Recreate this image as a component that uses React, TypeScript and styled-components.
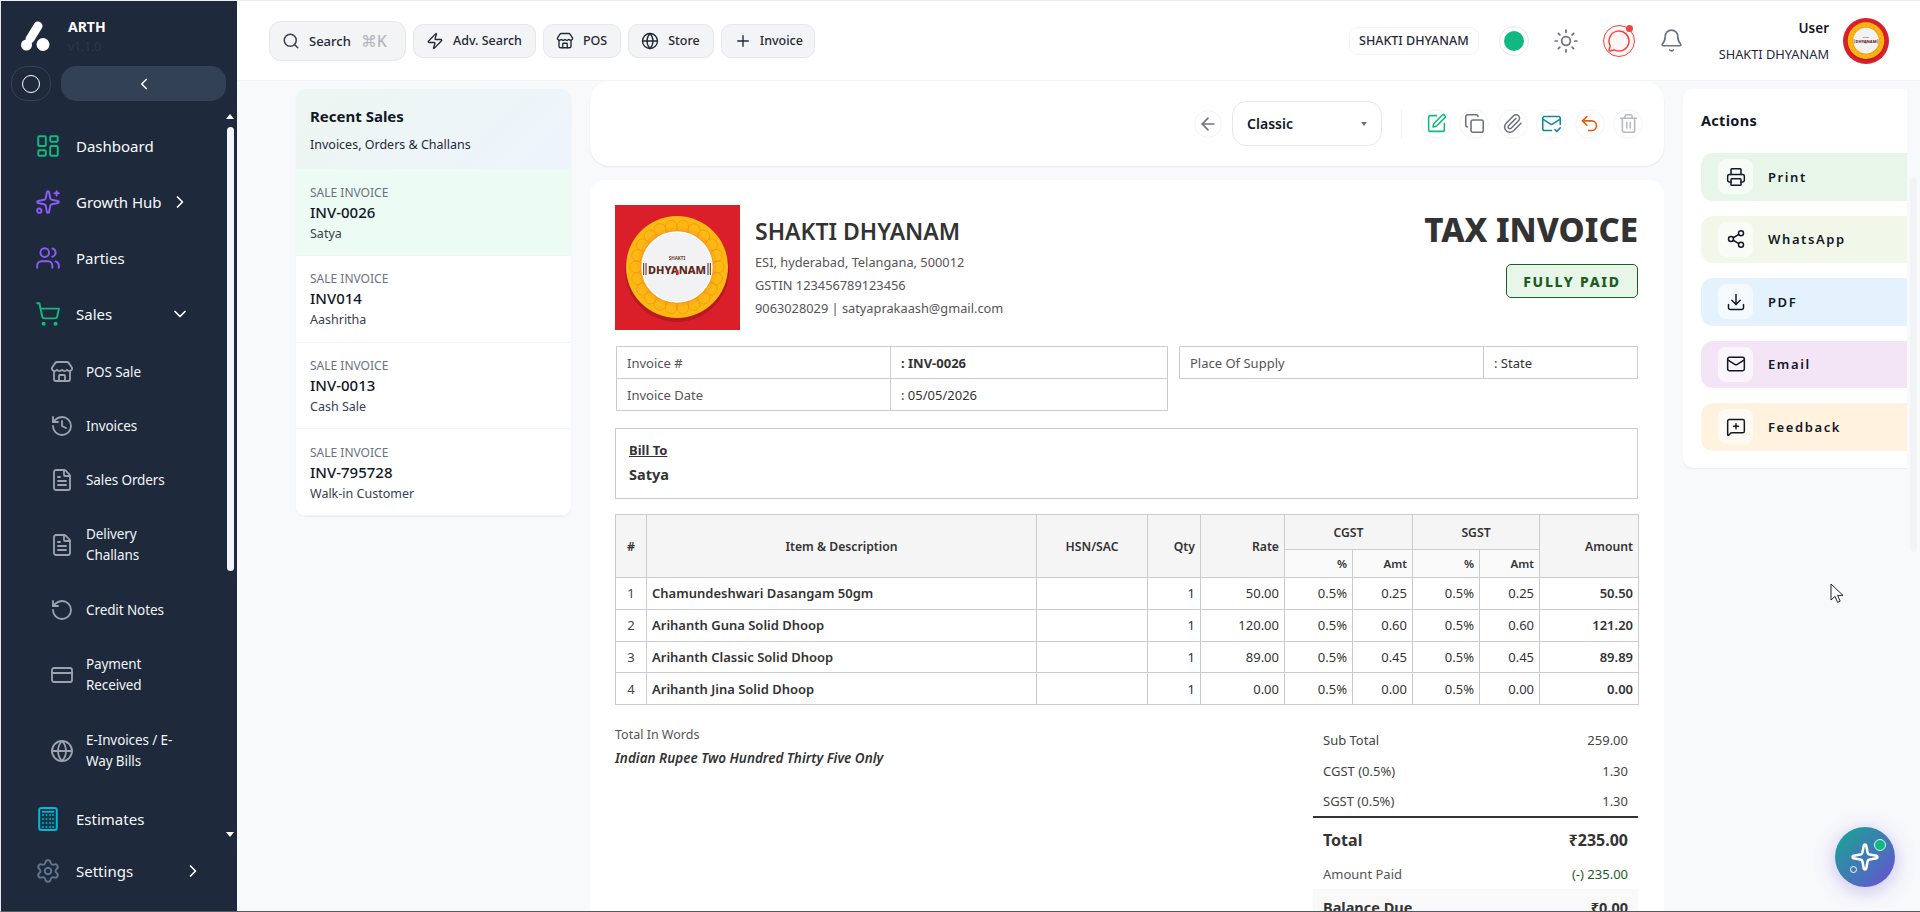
import styled, { createGlobalStyle } from "styled-components";
import {
  ArrowLeft, Bell, ChevronDown, ChevronLeft, ChevronRight, Copy, CreditCard, Download, FileText, Globe,
  History, LayoutDashboard, Mail, MailCheck, MessageCircle, MessageSquarePlus, Paperclip, Plus, Printer,
  RotateCcw, Search, Settings, Share2, ShoppingCart, Sparkle, Sparkles, SquarePen, Store, Sun, Trash2,
  Undo2, Users, Zap,
} from "lucide-react";

const FONT = `"Noto Sans", "Open Sans", sans-serif`;

const GlobalStyle = createGlobalStyle`
  * { box-sizing: border-box; }
  html, body { margin: 0; height: 100%; overflow: hidden; }
  body { font-family: ${FONT}; color: #1f2937; background: #f8f9fb; }
`;

const petals = Array.from({ length: 22 }, (_, i) => (i * Math.PI * 2) / 22);

const BrandPlate = ({ box }: { box: string }) => (
  <svg viewBox={box} width="100%" height="100%" aria-hidden="true">
    <rect x="-4" y="-4" width="133" height="133" fill="#db1f2a" />
    <circle cx="62" cy="65" r="52" fill="#b71a24" />
    <circle cx="62" cy="62" r="51" fill="#fdb913" />
    <circle cx="62" cy="62" r="40" fill="#fbae17" />
    {petals.map((a) => (
      <circle key={a} cx={62 + Math.cos(a) * 41} cy={62 + Math.sin(a) * 41} r="6" fill="none" stroke="#f28c0f" strokeWidth="0.9" opacity="0.7" />
    ))}
    <circle cx="62" cy="62" r="37" fill="#f7941d" opacity="0.6" />
    <circle cx="62" cy="62" r="35" fill="#f2f2f4" stroke="#fff" strokeWidth="1.5" />
    <text x="62" y="55" textAnchor="middle" fontFamily="Noto Sans" fontSize="4.5" fontWeight="700" fill="#6b3a2a">SHAKTI</text>
    <rect x="28" y="58" width="1.2" height="12" fill="#7b4a3a" />
    <rect x="30.4" y="58" width="1.2" height="12" fill="#7b4a3a" />
    <rect x="92.4" y="58" width="1.2" height="12" fill="#7b4a3a" />
    <rect x="94.8" y="58" width="1.2" height="12" fill="#7b4a3a" />
    <text x="33" y="68.5" fontFamily="Noto Sans" fontSize="11" fontWeight="800" fill="#5a2a1e" textLength="58" lengthAdjust="spacingAndGlyphs">DHYANAM</text>
    <rect x="61" y="65" width="2.4" height="5" fill="#db1f2a" />
  </svg>
);

const BrandMark = () => (
  <svg width="30" height="32" viewBox="0 0 30 32" aria-hidden="true">
    <line x1="18" y1="6" x2="10" y2="19" stroke="#fff" strokeWidth="9" strokeLinecap="round" />
    <circle cx="6.5" cy="25" r="5.5" fill="#fff" />
    <circle cx="23" cy="24.5" r="6.5" fill="#fff" />
  </svg>
);

const EstimateIcon = () => (
  <svg width="26" height="26" viewBox="0 0 26 26" aria-hidden="true">
    <rect x="4.2" y="2" width="17.6" height="22" rx="2" fill="#12384a" stroke="#06b6d4" strokeWidth="2" />
    <rect x="7" y="5" width="12" height="1.6" fill="#06b6d4" />
    {[9, 13, 17, 21].map((y) =>
      [8, 11.5, 15, 18].map((x) => <rect key={`${x}-${y}`} x={x - 0.8} y={y - 0.8} width="1.6" height="1.6" fill="#06b6d4" />)
    )}
  </svg>
);

const PointerCursor = () => (
  <svg width="14" height="21" viewBox="0 0 14 21" aria-hidden="true">
    <path d="M1 1v16l4-3.6 2.6 6 2.6-1.2-2.6-5.8H13z" fill="#fff" stroke="#222" strokeWidth="1" strokeLinejoin="round" />
  </svg>
);

const subItems = [
  { label: "POS Sale", icon: Store },
  { label: "Invoices", icon: History },
  { label: "Sales Orders", icon: FileText },
  { label: "Delivery Challans", icon: FileText, tall: true },
  { label: "Credit Notes", icon: RotateCcw },
  { label: "Payment Received", icon: CreditCard, tall: true },
  { label: "E-Invoices / E-Way Bills", icon: Globe, tall: true },
];

const headerActions = [
  { label: "Adv. Search", icon: Zap },
  { label: "POS", icon: Store },
  { label: "Store", icon: Globe },
  { label: "Invoice", icon: Plus, tight: true },
];

const toolIcons = [
  { icon: SquarePen, color: "#10b981" },
  { icon: Copy, color: "#6b7280" },
  { icon: Paperclip, color: "#6b7280" },
  { icon: MailCheck, color: "#0e8a9a" },
  { icon: Undo2, color: "#ea580c" },
  { icon: Trash2, color: "#b5b9c0" },
];

const recent = [
  { no: "INV-0026", who: "Satya", active: true },
  { no: "INV014", who: "Aashritha" },
  { no: "INV-0013", who: "Cash Sale" },
  { no: "INV-795728", who: "Walk-in Customer" },
];

const actions = [
  { label: "Print", icon: Printer, bg: "#e8f5e9" },
  { label: "WhatsApp", icon: Share2, bg: "#f1f8e9" },
  { label: "PDF", icon: Download, bg: "#e3f2fd" },
  { label: "Email", icon: Mail, bg: "#f3e5f5" },
  { label: "Feedback", icon: MessageSquarePlus, bg: "#fff3e0" },
];

const items = [
  ["1", "Chamundeshwari Dasangam 50gm", "50.00", "0.25", "50.50"],
  ["2", "Arihanth Guna Solid Dhoop", "120.00", "0.60", "121.20"],
  ["3", "Arihanth Classic Solid Dhoop", "89.00", "0.45", "89.89"],
  ["4", "Arihanth Jina Solid Dhoop", "0.00", "0.00", "0.00"],
];

const colWidths = [31, 390, 111, 53, 84, 68, 60, 67, 60, 99];

export default function App() {
  return (
    <>
      <GlobalStyle />
      <Shell>
        <Sidebar>
          <Brand>
            <BrandMark />
            <BrandText>
              <strong>ARTH</strong>
              <span>v1.1.0</span>
            </BrandText>
          </Brand>
          <SideControls>
            <RoundToggle><i /></RoundToggle>
            <CollapseButton><ChevronLeft size={18} color="#fff" /></CollapseButton>
          </SideControls>
          <Nav>
            <NavItem>
              <LayoutDashboard size={26} color="#10b981" strokeWidth={1.8} />
              <NavLabel>Dashboard</NavLabel>
            </NavItem>
            <NavItem>
              <Sparkles size={26} color="#8b5cf6" strokeWidth={1.8} />
              <NavLabel $width={79}>Growth Hub</NavLabel>
              <ChevronRight size={20} color="#fff" />
            </NavItem>
            <NavItem>
              <Users size={26} color="#8b5cf6" strokeWidth={1.8} />
              <NavLabel>Parties</NavLabel>
            </NavItem>
            <NavItem>
              <ShoppingCart size={26} color="#10b981" strokeWidth={1.8} />
              <NavLabel $width={79}>Sales</NavLabel>
              <ChevronDown size={20} color="#fff" />
            </NavItem>
            <SubList>
              {subItems.map(({ label, icon: Icon, tall }) => (
                <SubItem key={label} $tall={tall}>
                  <Icon size={24} color="#9ca3af" strokeWidth={1.8} />
                  <span>{label}</span>
                </SubItem>
              ))}
            </SubList>
            <NavItem>
              <EstimateIcon />
              <NavLabel>Estimates</NavLabel>
            </NavItem>
          </Nav>
          <SettingsRow>
            <Settings size={26} color="#64748b" strokeWidth={1.8} />
            <NavLabel $width={92}>Settings</NavLabel>
            <ChevronRight size={20} color="#fff" />
          </SettingsRow>
          <ScrollBar $left={226} $top={113} $height={723} $arrow="#fff">
            <ScrollThumb $offset={13} $height={444} $color="#f1f5f9" />
          </ScrollBar>
        </Sidebar>

        <Workspace>
          <TopBar>
            <SearchButton>
              <Search size={18} color="#374151" />
              <span>Search</span>
              <kbd>⌘K</kbd>
            </SearchButton>
            {headerActions.map(({ label, icon: Icon, tight }) => (
              <HeaderButton key={label} $tight={tight}>
                <Icon size={18} color="#1f2937" strokeWidth={1.8} />
                <span>{label}</span>
              </HeaderButton>
            ))}
            <TopRight>
              <CompanyPill>SHAKTI DHYANAM</CompanyPill>
              <StatusRing><i /></StatusRing>
              <Sun size={26} color="#6b7280" strokeWidth={1.6} />
              <ChatRing>
                <MessageCircle size={24} color="#ef4444" strokeWidth={1.5} />
              </ChatRing>
              <Bell size={25} color="#6b7280" strokeWidth={1.6} />
              <UserBlock>
                <strong>User</strong>
                <span>SHAKTI DHYANAM</span>
              </UserBlock>
              <Avatar><BrandPlate box="-2 -1 128 128" /></Avatar>
            </TopRight>
          </TopBar>

          <Content>
            <RecentCard>
              <RecentHead>
                <h3>Recent Sales</h3>
                <p>Invoices, Orders &amp; Challans</p>
              </RecentHead>
              {recent.map((r) => (
                <RecentRow key={r.no} $active={r.active}>
                  <small>SALE INVOICE</small>
                  <b>{r.no}</b>
                  <span>{r.who}</span>
                </RecentRow>
              ))}
            </RecentCard>

            <Center>
              <Toolbar>
                <BackButton><ArrowLeft size={20} color="#6b7280" /></BackButton>
                <TemplateSelect>
                  <span>Classic</span>
                  <i />
                </TemplateSelect>
                <ToolDivider />
                <ToolGroup>
                  {toolIcons.map(({ icon: Icon, color }, i) => (
                    <ToolButton key={i}><Icon size={21} color={color} strokeWidth={1.8} /></ToolButton>
                  ))}
                </ToolGroup>
              </Toolbar>

              <InvoiceCard>
                <InvoiceHead>
                  <CompanyLogo><BrandPlate box="0 0 125 125" /></CompanyLogo>
                  <CompanyInfo>
                    <h2>SHAKTI DHYANAM</h2>
                    <p>ESI, hyderabad, Telangana, 500012</p>
                    <p>GSTIN 123456789123456</p>
                    <p>9063028029 | satyaprakaash@gmail.com</p>
                  </CompanyInfo>
                  <TitleBlock>
                    <h1>TAX INVOICE</h1>
                    <PaidBadge>FULLY PAID</PaidBadge>
                  </TitleBlock>
                </InvoiceHead>

                <MetaRow>
                  <MetaTable $width={552}>
                    <tbody>
                      <tr><MetaLabel $width={274}>Invoice #</MetaLabel><MetaValue $strong>: INV-0026</MetaValue></tr>
                      <tr><MetaLabel $width={274}>Invoice Date</MetaLabel><MetaValue>: 05/05/2026</MetaValue></tr>
                    </tbody>
                  </MetaTable>
                  <MetaTable $width={459}>
                    <tbody>
                      <tr><MetaLabel $width={304}>Place Of Supply</MetaLabel><MetaValue>: State</MetaValue></tr>
                    </tbody>
                  </MetaTable>
                </MetaRow>

                <BillBox>
                  <u>Bill To</u>
                  <strong>Satya</strong>
                </BillBox>

                <ItemsTable>
                  <colgroup>
                    {colWidths.map((w, i) => <ItemCol key={i} $width={w} />)}
                  </colgroup>
                  <thead>
                    <tr>
                      <HeadCell rowSpan={2} $align="center">#</HeadCell>
                      <HeadCell rowSpan={2} $align="center">Item &amp; Description</HeadCell>
                      <HeadCell rowSpan={2} $align="center">HSN/SAC</HeadCell>
                      <HeadCell rowSpan={2}>Qty</HeadCell>
                      <HeadCell rowSpan={2}>Rate</HeadCell>
                      <GroupCell colSpan={2}>CGST</GroupCell>
                      <GroupCell colSpan={2}>SGST</GroupCell>
                      <HeadCell rowSpan={2}>Amount</HeadCell>
                    </tr>
                    <tr>
                      <SubHeadCell>%</SubHeadCell>
                      <SubHeadCell>Amt</SubHeadCell>
                      <SubHeadCell>%</SubHeadCell>
                      <SubHeadCell>Amt</SubHeadCell>
                    </tr>
                  </thead>
                  <tbody>
                    {items.map(([n, name, rate, tax, amount]) => (
                      <tr key={n}>
                        <BodyCell $align="center">{n}</BodyCell>
                        <BodyCell $align="left" $bold>{name}</BodyCell>
                        <BodyCell />
                        <BodyCell>1</BodyCell>
                        <BodyCell>{rate}</BodyCell>
                        <BodyCell>0.5%</BodyCell>
                        <BodyCell>{tax}</BodyCell>
                        <BodyCell>0.5%</BodyCell>
                        <BodyCell>{tax}</BodyCell>
                        <BodyCell $bold>{amount}</BodyCell>
                      </tr>
                    ))}
                  </tbody>
                </ItemsTable>

                <Summary>
                  <Words>
                    <span>Total In Words</span>
                    <em>Indian Rupee Two Hundred Thirty Five Only</em>
                  </Words>
                  <Totals>
                    <TotalLine><span>Sub Total</span><span>259.00</span></TotalLine>
                    <TotalLine><span>CGST (0.5%)</span><span>1.30</span></TotalLine>
                    <TotalLine><span>SGST (0.5%)</span><span>1.30</span></TotalLine>
                    <GrandLine><span>Total</span><span>₹235.00</span></GrandLine>
                    <TotalLine $muted><span>Amount Paid</span><PaidValue>(-) 235.00</PaidValue></TotalLine>
                    <BalanceLine><span>Balance Due</span><span>₹0.00</span></BalanceLine>
                  </Totals>
                </Summary>
              </InvoiceCard>
            </Center>

            <ActionsCard>
              <h4>Actions</h4>
              {actions.map(({ label, icon: Icon, bg }) => (
                <ActionRow key={label} $bg={bg}>
                  <ActionIcon><Icon size={20} color="#111827" strokeWidth={1.8} /></ActionIcon>
                  <span>{label}</span>
                </ActionRow>
              ))}
            </ActionsCard>
          </Content>
        </Workspace>

        <PageScroll>
          <ScrollThumb $offset={97} $height={374} $color="#f1f3f6" />
        </PageScroll>
        <Assistant>
          <Sparkle size={30} color="#fff" strokeWidth={2} />
          <AssistantOrbit />
          <AssistantDot />
        </Assistant>
        <CursorMark><PointerCursor /></CursorMark>
      </Shell>
    </>
  );
}

const Shell = styled.div`
  position: relative;
  display: flex;
  height: 100vh;
  overflow: hidden;
  border-top: 1px solid #eceef1;
  border-left: 1px solid #e5e7eb;
  border-bottom: 1px solid #555b63;
  background: #f8f9fb;
`;

const Sidebar = styled.aside`
  position: relative;
  flex: 0 0 236px;
  display: flex;
  flex-direction: column;
  background: #1e293b;
  color: #f1f5f9;
`;

const Brand = styled.div`
  display: flex;
  align-items: flex-start;
  gap: 18px;
  height: 65px;
  padding: 19px 0 0 19px;
`;

const BrandText = styled.div`
  display: flex;
  flex-direction: column;
  margin-top: -2px;
  strong { font-size: 14px; line-height: 17px; color: #fff; }
  span { font-size: 12px; line-height: 23px; color: #2d3a4e; }
`;

const SideControls = styled.div`
  display: flex;
  gap: 10px;
  padding-left: 10px;
`;

const RoundToggle = styled.div`
  width: 40px;
  height: 35px;
  display: flex;
  align-items: center;
  justify-content: center;
  border: 1px solid #334155;
  border-radius: 16px;
  i { width: 18px; height: 18px; border: 1.5px solid #fff; border-radius: 50%; }
`;

const CollapseButton = styled.div`
  width: 165px;
  height: 35px;
  display: flex;
  align-items: center;
  justify-content: center;
  background: #334155;
  border-radius: 15px;
`;

const Nav = styled.nav`
  flex: 1;
  margin-top: 17px;
  overflow: hidden;
`;

const NavItem = styled.div`
  display: flex;
  align-items: center;
  gap: 15px;
  height: 56px;
  padding-left: 34px;
`;

const NavLabel = styled.span<{ $width?: number }>`
  font-size: 15px;
  color: #f8fafc;
  white-space: nowrap;
  width: ${(p) => (p.$width ? `${p.$width}px` : "auto")};
`;

const SubList = styled.div`
  margin: 3px 0 2px;
`;

const SubItem = styled.div<{ $tall?: boolean }>`
  display: flex;
  align-items: center;
  gap: 12px;
  height: ${(p) => (p.$tall ? 76 : 54)}px;
  padding-left: 49px;
  font-size: 13.5px;
  line-height: 21px;
  color: #f1f5f9;
  letter-spacing: -0.1px;
  svg { flex: none; }
  span { width: 96px; }
`;

const SettingsRow = styled(NavItem)`
  flex: none;
  margin-bottom: 12px;
`;

const ScrollBar = styled.div<{ $left: number; $top: number; $height: number; $arrow: string }>`
  position: absolute;
  left: ${(p) => p.$left}px;
  top: ${(p) => p.$top}px;
  width: 7px;
  height: ${(p) => p.$height}px;
  &::before, &::after {
    content: "";
    position: absolute;
    left: -1px;
    border-left: 4.5px solid transparent;
    border-right: 4.5px solid transparent;
  }
  &::before { top: 0; border-bottom: 5px solid ${(p) => p.$arrow}; }
  &::after { bottom: 0; border-top: 5px solid ${(p) => p.$arrow}; }
`;

const ScrollThumb = styled.div<{ $offset: number; $height: number; $color: string }>`
  position: absolute;
  left: 0;
  top: ${(p) => p.$offset}px;
  width: 7px;
  height: ${(p) => p.$height}px;
  background: ${(p) => p.$color};
  border-radius: 4px;
`;

const Workspace = styled.div`
  flex: 1;
  min-width: 0;
  display: flex;
  flex-direction: column;
`;

const TopBar = styled.header`
  flex: none;
  display: flex;
  align-items: center;
  gap: 7px;
  height: 80px;
  padding: 0 31px 0 32px;
  background: #fff;
  border-bottom: 1px solid #f1f3f5;
`;

const HeaderButton = styled.div<{ $tight?: boolean }>`
  display: flex;
  align-items: center;
  gap: ${(p) => (p.$tight ? 8 : 9)}px;
  height: 34px;
  padding: 0 ${(p) => (p.$tight ? 11 : 13)}px 0 12px;
  background: #f3f4f6;
  border: 1px solid #e5e7eb;
  border-radius: 10px;
  font-size: 12.5px;
  font-weight: 500;
  color: #1f2937;
`;

const SearchButton = styled(HeaderButton)`
  width: 137px;
  height: 40px;
  border-radius: 12px;
  font-size: 13px;
  kbd { font-family: ${FONT}; font-size: 16px; color: #b4b8bf; margin-left: 1px; }
`;

const TopRight = styled.div`
  display: flex;
  align-items: center;
  gap: 24px;
  margin-left: auto;
`;

const CompanyPill = styled.div`
  height: 28px;
  padding: 0 9px;
  margin-right: -4px;
  display: flex;
  align-items: center;
  border: 1px solid #f1f3f5;
  border-radius: 9px;
  font-size: 12.5px;
  font-weight: 500;
  color: #1f2937;
`;

const StatusRing = styled.div`
  width: 30px;
  height: 30px;
  display: flex;
  align-items: center;
  justify-content: center;
  border: 1px solid #e5e7eb;
  border-radius: 50%;
  i { width: 20px; height: 20px; background: #10b981; border-radius: 50%; }
`;

const ChatRing = styled.div`
  position: relative;
  width: 32px;
  height: 32px;
  display: flex;
  align-items: center;
  justify-content: center;
  background: #fff5f5;
  border: 1px solid #ef4444;
  border-radius: 50%;
  &::after {
    content: "";
    position: absolute;
    top: -1px;
    right: 1px;
    width: 7px;
    height: 7px;
    background: #ef4444;
    border-radius: 50%;
  }
`;

const UserBlock = styled.div`
  display: flex;
  flex-direction: column;
  align-items: flex-end;
  gap: 8px;
  margin-left: 11px;
  margin-right: -10px;
  strong { font-size: 13.5px; line-height: 18px; color: #111827; font-weight: 600; }
  span { font-size: 12.8px; line-height: 18px; color: #1f2937; }
`;

const Avatar = styled.div`
  width: 46px;
  height: 46px;
  border-radius: 50%;
  overflow: hidden;
`;

const Content = styled.main`
  flex: 1;
  min-height: 0;
  display: flex;
  align-items: flex-start;
  gap: 19px;
  padding-left: 59px;
  overflow: hidden;
`;

const RecentCard = styled.section`
  flex: 0 0 275px;
  margin-top: 8px;
  background: #fff;
  border-radius: 10px;
  overflow: hidden;
  box-shadow: 0 1px 2px rgba(15, 23, 42, 0.06);
`;

const RecentHead = styled.div`
  height: 80px;
  padding: 16px 14px 0;
  background: linear-gradient(135deg, #edf6f1, #eef4fd);
  h3 { margin: 0; font-size: 15px; line-height: 22px; font-weight: 700; color: #111827; }
  p { margin: 8px 0 0; font-size: 12.5px; line-height: 20px; color: #1f2937; }
`;

const RecentRow = styled.div<{ $active?: boolean }>`
  display: flex;
  flex-direction: column;
  height: 86.75px;
  padding: 14.5px 14px 0;
  background: ${(p) => (p.$active ? "#ecfbf3" : "#fff")};
  border-bottom: 1px solid #f1f3f5;
  small { font-size: 12px; line-height: 18px; color: #6b7280; }
  b { font-size: 15px; line-height: 21px; font-weight: 500; color: #111827; }
  span { font-size: 12.5px; line-height: 21px; color: #374151; }
`;

const Center = styled.div`
  flex: 0 0 1074px;
  min-width: 0;
  display: flex;
  flex-direction: column;
  gap: 14px;
`;

const Toolbar = styled.div`
  display: flex;
  align-items: center;
  justify-content: flex-end;
  height: 85px;
  padding-right: 21px;
  background: #fff;
  border-radius: 20px;
  box-shadow: 0 1px 2px rgba(15, 23, 42, 0.08);
`;

const ToolButton = styled.div`
  width: 30px;
  height: 30px;
  display: flex;
  align-items: center;
  justify-content: center;
  border: 1px solid #f3f4f6;
  border-radius: 50%;
`;

const BackButton = styled(ToolButton)`
  width: 28px;
  height: 28px;
`;

const TemplateSelect = styled.div`
  width: 150px;
  height: 45px;
  margin-left: 10px;
  padding: 0 14px;
  display: flex;
  align-items: center;
  justify-content: space-between;
  border: 1px solid #e5e7eb;
  border-radius: 14px;
  font-size: 14px;
  font-weight: 600;
  color: #111827;
  i {
    border-left: 3.5px solid transparent;
    border-right: 3.5px solid transparent;
    border-top: 4px solid #6b7280;
  }
`;

const ToolDivider = styled.div`
  width: 1px;
  height: 30px;
  margin: 0 19px;
  background: #f1f3f5;
`;

const ToolGroup = styled.div`
  display: flex;
  gap: 8.4px;
`;

const InvoiceCard = styled.section`
  padding: 25px 26px 25px 25px;
  background: #fff;
  border-radius: 14px 14px 0 0;
  color: #333;
`;

const InvoiceHead = styled.div`
  display: flex;
  align-items: flex-start;
  height: 125px;
`;

const CompanyLogo = styled.div`
  flex: none;
  width: 125px;
  height: 125px;
`;

const CompanyInfo = styled.div`
  margin-left: 15px;
  padding-top: 11px;
  h2 { margin: 0 0 5px; font-size: 23px; line-height: 30px; font-weight: 600; color: #333; }
  p { margin: 0; font-size: 12.8px; line-height: 23px; color: #555; }
`;

const TitleBlock = styled.div`
  margin-left: auto;
  display: flex;
  flex-direction: column;
  align-items: flex-end;
  h1 { margin: 3px 0 12px; font-size: 33px; line-height: 44px; font-weight: 800; color: #333; white-space: nowrap; }
`;

const PaidBadge = styled.div`
  width: 132px;
  height: 34px;
  display: flex;
  align-items: center;
  justify-content: center;
  background: #e8f5e9;
  border: 1px solid #1b5e20;
  border-radius: 5px;
  font-size: 14px;
  font-weight: 800;
  letter-spacing: 1.7px;
  color: #1b5e20;
`;

const MetaRow = styled.div`
  display: flex;
  justify-content: space-between;
  margin-top: 16px;
  padding-left: 1px;
`;

const MetaTable = styled.table<{ $width: number }>`
  width: ${(p) => p.$width}px;
  height: fit-content;
  border-collapse: collapse;
  table-layout: fixed;
  font-size: 13px;
  td { height: 32px; padding: 0 0 0 10px; border: 1px solid #ccc; }
`;

const MetaLabel = styled.td<{ $width: number }>`
  width: ${(p) => p.$width}px;
  color: #555;
`;

const MetaValue = styled.td<{ $strong?: boolean }>`
  color: #333;
  font-weight: ${(p) => (p.$strong ? 700 : 400)};
`;

const BillBox = styled.div`
  display: flex;
  flex-direction: column;
  height: 71px;
  margin-top: 17px;
  padding: 11px 13px;
  border: 1px solid #ccc;
  u { font-size: 13px; line-height: 20px; font-weight: 700; color: #333; }
  strong { margin-top: 4px; font-size: 14.5px; line-height: 20px; font-weight: 700; color: #333; }
`;

const ItemsTable = styled.table`
  width: 1023px;
  margin-top: 15px;
  border-collapse: collapse;
  table-layout: fixed;
  font-size: 13px;
`;

const ItemCol = styled.col<{ $width: number }>`
  width: ${(p) => p.$width}px;
`;

const HeadCell = styled.th<{ $align?: string }>`
  padding: 0 5px;
  background: #f5f5f5;
  border: 1px solid #ccc;
  font-size: 12.2px;
  font-weight: 600;
  color: #333;
  text-align: ${(p) => p.$align ?? "right"};
`;

const GroupCell = styled(HeadCell)`
  height: 35px;
  text-align: center;
`;

const SubHeadCell = styled(HeadCell)`
  height: 28px;
  background: #fafafa;
  font-size: 11.5px;
`;

const BodyCell = styled.td<{ $align?: string; $bold?: boolean }>`
  height: 31.75px;
  padding: 0 5px;
  border: 1px solid #ccc;
  color: #333;
  text-align: ${(p) => p.$align ?? "right"};
  font-weight: ${(p) => (p.$bold ? 600 : 400)};
  &:first-child { color: #444; }
`;

const Summary = styled.div`
  display: flex;
  justify-content: space-between;
  align-items: flex-start;
  margin-top: 20px;
`;

const Words = styled.div`
  display: flex;
  flex-direction: column;
  span { font-size: 12.5px; line-height: 20px; color: #555; }
  em { margin-top: 3px; font-size: 13.5px; line-height: 20px; font-weight: 600; color: #333; }
`;

const Totals = styled.div`
  width: 325px;
`;

const TotalLine = styled.div<{ $muted?: boolean }>`
  display: flex;
  justify-content: space-between;
  align-items: center;
  height: 30.5px;
  padding: 0 10px;
  font-size: 13px;
  color: ${(p) => (p.$muted ? "#555" : "#444")};
`;

const GrandLine = styled(TotalLine)`
  height: 43px;
  margin-top: -1px;
  padding-top: 4px;
  border-top: 2px solid #333;
  font-size: 16px;
  font-weight: 700;
  color: #333;
`;

const BalanceLine = styled(TotalLine)`
  height: 36px;
  background: #f9f9f9;
  font-size: 14.5px;
  font-weight: 700;
  color: #333;
`;

const PaidValue = styled.span`
  color: #1b5e20;
`;

const ActionsCard = styled.section`
  flex: 0 0 260px;
  margin-top: 8px;
  height: 379px;
  padding: 19px 18px 0;
  background: #fff;
  border-radius: 10px;
  box-shadow: 0 1px 2px rgba(15, 23, 42, 0.06);
  h4 { margin: 0 0 21px; font-size: 14.5px; line-height: 24px; font-weight: 700; color: #111827; letter-spacing: 0.3px; }
`;

const ActionRow = styled.div<{ $bg: string }>`
  display: flex;
  align-items: center;
  gap: 15px;
  height: 47.5px;
  margin-bottom: 15px;
  padding-left: 17px;
  background: ${(p) => p.$bg};
  border-radius: 12px;
  font-size: 13px;
  font-weight: 600;
  letter-spacing: 1.6px;
  color: #111827;
`;

const ActionIcon = styled.div`
  width: 35px;
  height: 35px;
  display: flex;
  align-items: center;
  justify-content: center;
  background: rgba(255, 255, 255, 0.6);
  border-radius: 8px;
`;

const PageScroll = styled.div`
  position: absolute;
  top: 80px;
  right: 0;
  bottom: 0;
  width: 13px;
  background: #f8f9fb;
  padding-left: 3px;
  ${ScrollThumb} { left: 3px; }
`;

const Assistant = styled.div`
  position: absolute;
  left: 1834px;
  top: 826px;
  width: 60px;
  height: 60px;
  display: flex;
  align-items: center;
  justify-content: center;
  border-radius: 50%;
  background: linear-gradient(135deg, #14a88e, #6a4fd8);
  box-shadow: 0 4px 20px rgba(106, 79, 216, 0.35);
`;

const AssistantOrbit = styled.span`
  position: absolute;
  left: 15px;
  top: 39px;
  width: 7px;
  height: 7px;
  border: 1.5px solid #fff;
  border-radius: 50%;
`;

const AssistantDot = styled.span`
  position: absolute;
  top: 12px;
  right: 9px;
  width: 12px;
  height: 12px;
  background: #10b981;
  border: 1.5px solid #d8f5ea;
  border-radius: 50%;
`;

const CursorMark = styled.div`
  position: absolute;
  left: 1829px;
  top: 582px;
  line-height: 0;
`;
